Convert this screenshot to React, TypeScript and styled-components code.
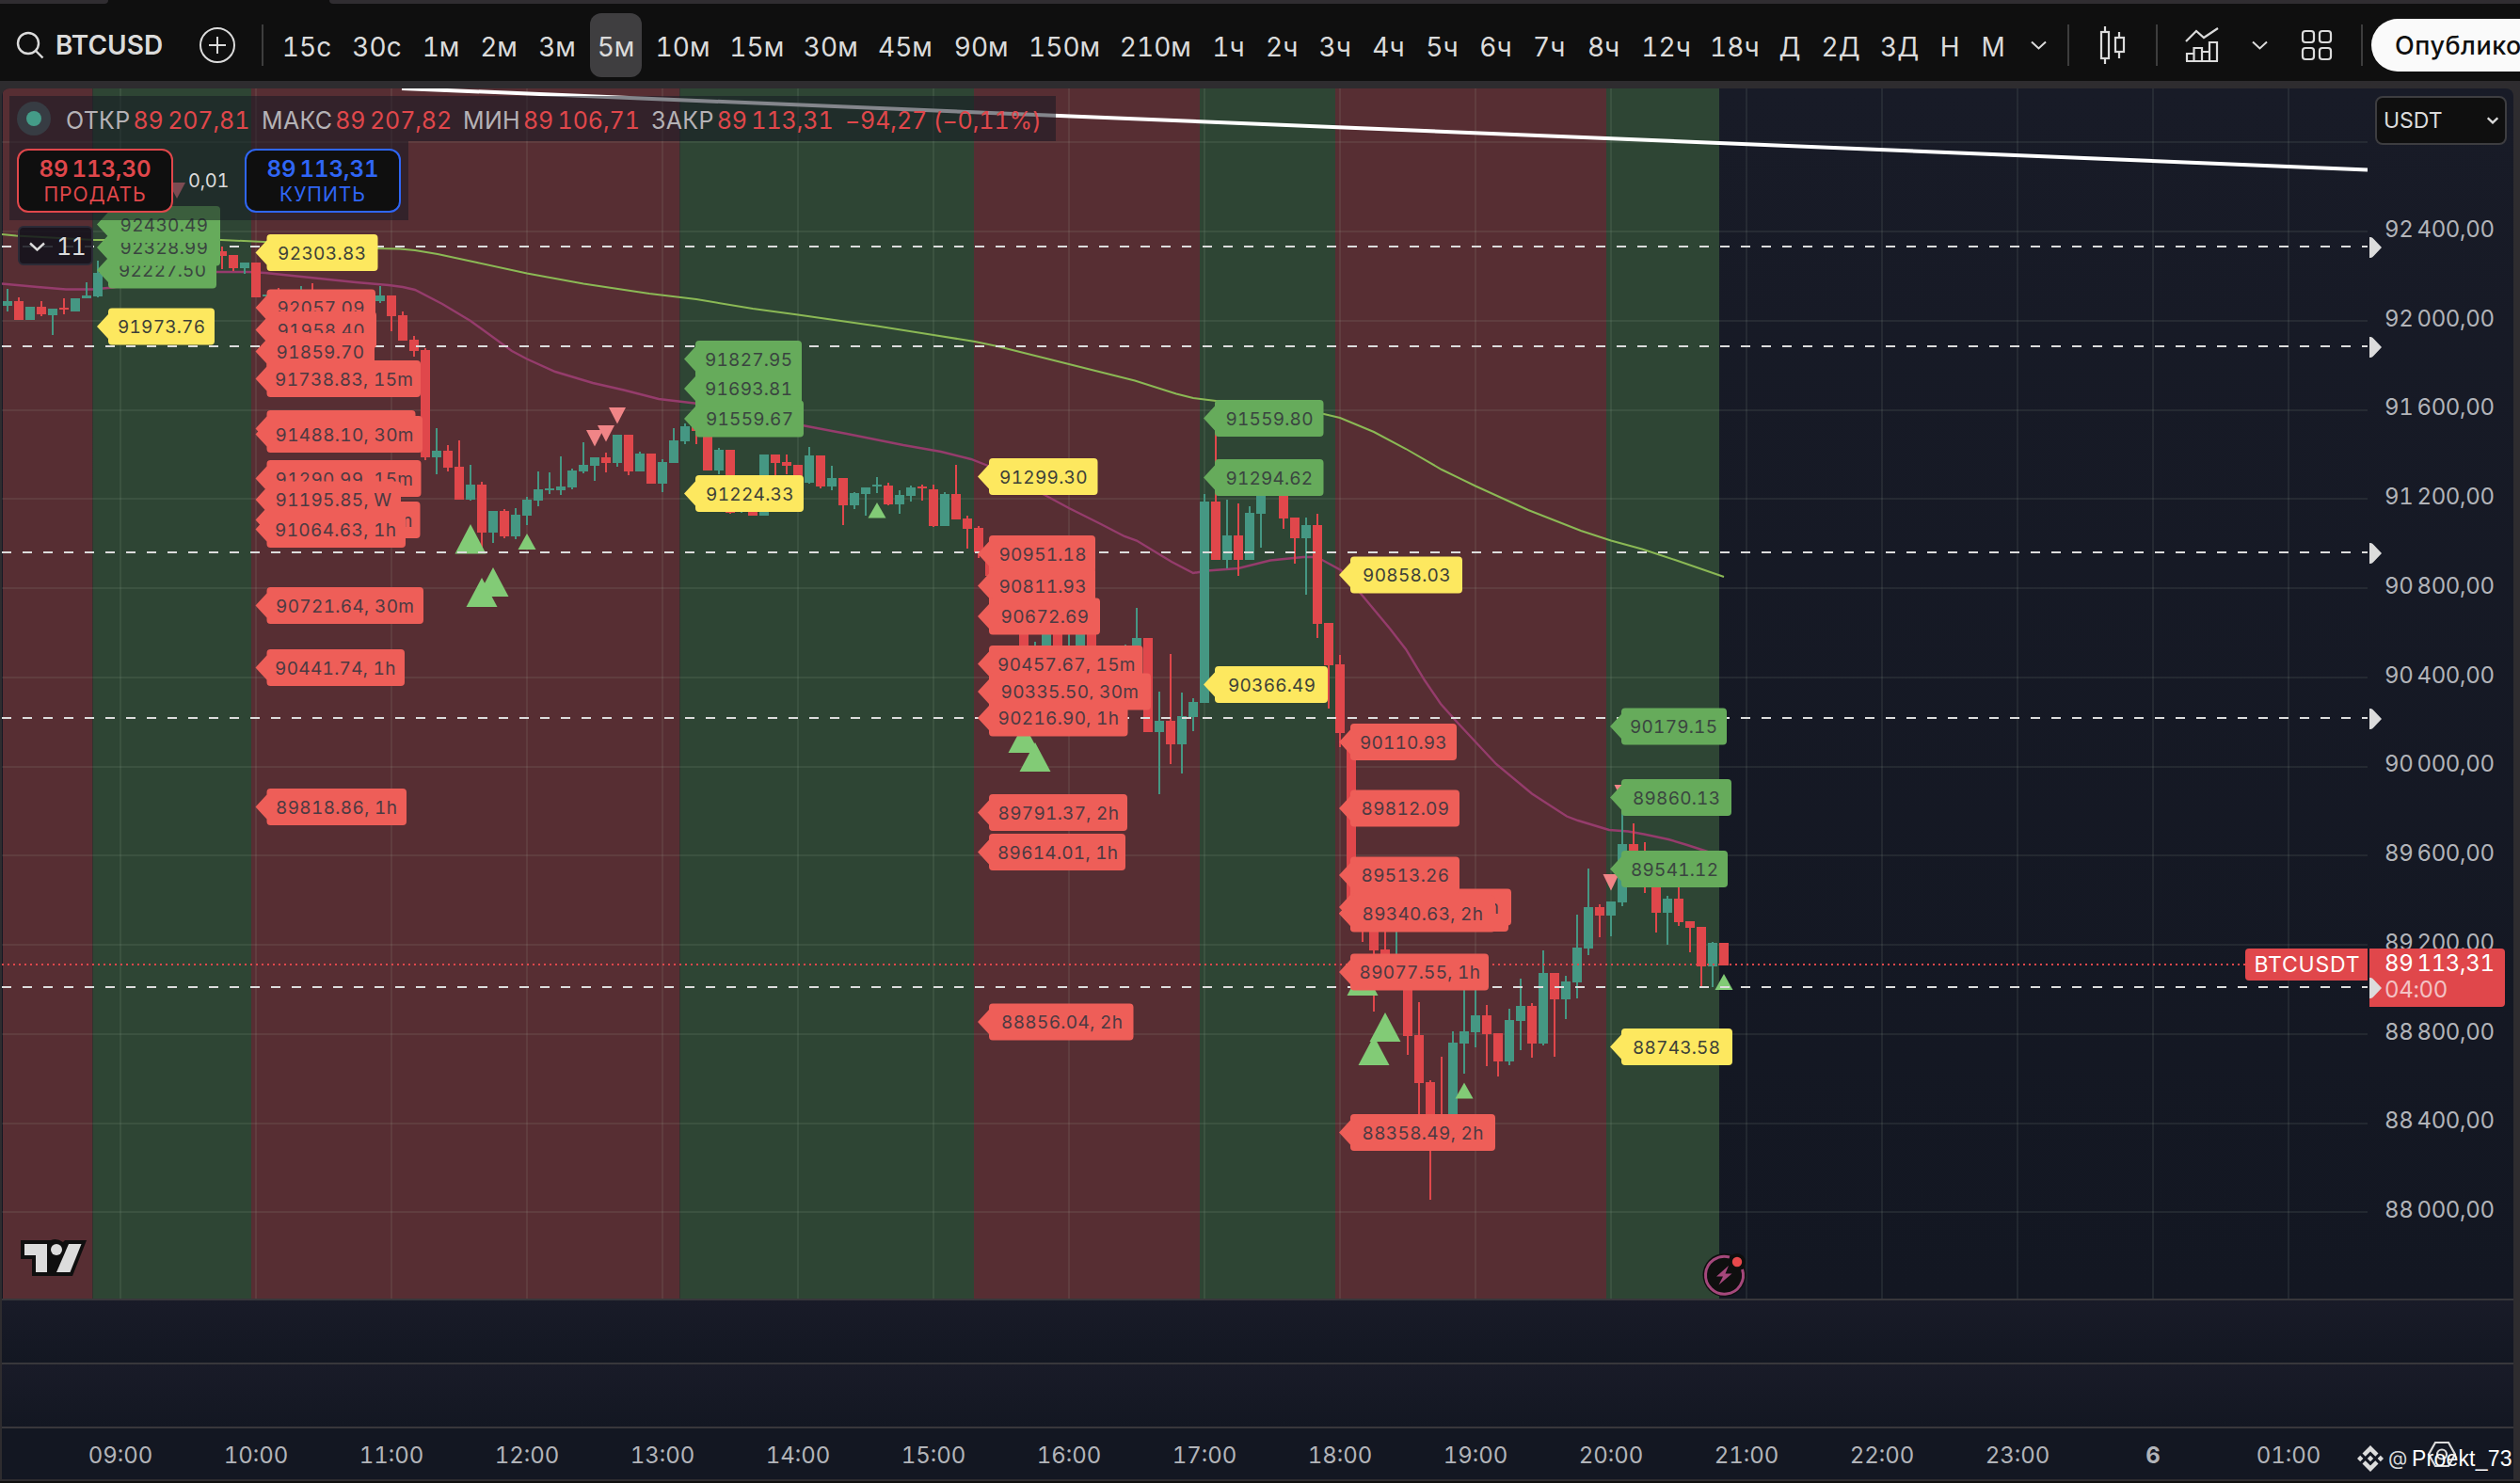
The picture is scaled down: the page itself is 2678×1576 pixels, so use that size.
import styled, { createGlobalStyle } from 'styled-components';

const UP = '#459783';
const DOWN = '#e0474b';

const palette = {
  green: { fill: '#66ab5b', text: '#3a4540' },
  yellow: { fill: '#fde85f', text: '#3c4038' },
  red: { fill: '#ee5e58', text: '#4c3a42' },
};

const GlobalStyle = createGlobalStyle`
  * {
    box-sizing: border-box;
  }

  body {
    margin: 0;
    background: #0f0f0f;
    font-family: Inter, 'Noto Sans', sans-serif;
    font-variant-numeric: tabular-nums;
    overflow: hidden;
  }
`;

const Page = styled.div`
  display: flex;
  flex-direction: column;
  width: 2678px;
  height: 1576px;
  background: #0f0f0f;
`;

const TabStrip = styled.div`
  display: flex;
  justify-content: space-between;
  height: 4px;
`;

const TabEdge = styled.div<{ $width: number; $side: 'left' | 'right' }>`
  width: ${({ $width }) => $width}px;
  background: #302d31;
  border-radius: ${({ $side }) => ($side === 'left' ? '0 0 6px 0' : '0 0 0 6px')};
`;

const Toolbar = styled.header`
  display: flex;
  align-items: center;
  height: 82px;
  padding: 6px 0 0 17px;
  color: #dbdbdb;
  font-size: 28px;
  overflow: hidden;
  white-space: nowrap;

  > * {
    flex-shrink: 0;
  }
`;

const SymbolSearch = styled.div`
  display: flex;
  align-items: center;
  gap: 12px;
  width: 194px;
  font-weight: 600;
  font-size: 28px;
`;

const Divider = styled.div<{ $before?: number; $after?: number }>`
  width: 2px;
  height: 44px;
  margin-left: ${({ $before = 0 }) => $before}px;
  margin-right: ${({ $after = 0 }) => $after}px;
  background: #3d3d3d;
`;

const Intervals = styled.div`
  display: flex;
  gap: 8px;
`;

const Interval = styled.div<{ $width: number; $active: boolean }>`
  display: flex;
  align-items: center;
  justify-content: center;
  width: ${({ $width }) => $width}px;
  height: 68px;
  padding-top: 3px;
  border-radius: 12px;
  background: ${({ $active }) => ($active ? '#3f3e40' : 'transparent')};
`;

const IconCell = styled.div<{ $width: number }>`
  display: flex;
  align-items: center;
  justify-content: center;
  width: ${({ $width }) => $width}px;
  height: 68px;
`;

const PublishButton = styled.div`
  display: flex;
  align-items: center;
  width: 240px;
  height: 56px;
  margin-left: 9px;
  padding-left: 25px;
  border-radius: 28px;
  background: #fafafa;
  color: #0f0f0f;
  font-size: 27px;
  font-weight: 500;
  letter-spacing: 0.5px;
`;

const Workspace = styled.main`
  display: flex;
  flex-direction: column;
  height: 1488px;
  padding: 8px 7px 2px 2px;
  background: #2e2c2f;
`;

const Main = styled.section`
  position: relative;
  display: flex;
  height: 1286px;
  border-radius: 8px 8px 0 0;
  background: linear-gradient(#181b27, #131722);
  overflow: hidden;
`;

const Plot = styled.svg`
  display: block;
  width: 2514px;
  height: 1286px;
`;

const EmptyPane = styled.div`
  height: 68px;
  border-top: 2px solid #38373b;
  background: linear-gradient(#191b28, #131722);
`;

const PriceAxis = styled.aside`
  position: relative;
  width: 155px;
  padding: 8px 0 0 8px;
`;

const CurrencySelect = styled.div`
  display: flex;
  align-items: center;
  justify-content: space-between;
  width: 140px;
  height: 52px;
  margin-bottom: 42px;
  padding: 0 7px;
  border: 2px solid #3d3d40;
  border-radius: 8px;
  background: #0f0f0f;
  color: #dbdbdb;
  font-size: 23px;
`;

const AxisPrice = styled.div`
  display: flex;
  align-items: center;
  height: 94.75px;
  padding-left: 10px;
  color: #b2b4b9;
  font-size: 24px;
  letter-spacing: -0.35px;
`;

const LineHandle = styled.svg<{ $top: number }>`
  position: absolute;
  left: 2px;
  top: ${({ $top }) => $top}px;
  width: 14px;
  height: 22px;
`;

const LastPrice = styled.div`
  position: absolute;
  left: 2px;
  top: 914px;
  display: flex;
  flex-direction: column;
  width: 144px;
  height: 62px;
  padding: 2px 0 0 16px;
  border-radius: 0 4px 4px 0;
  background: ${DOWN};
  color: #fff;
  font-size: 24px;
  line-height: 28px;
  letter-spacing: -0.35px;
`;

const Countdown = styled.span`
  color: #f3c2c4;
`;

const TimeAxis = styled.footer`
  position: relative;
  display: flex;
  align-items: center;
  height: 56px;
  padding-left: 54px;
  border-top: 2px solid #38373b;
  background: #131722;
`;

const TimeLabel = styled.div<{ $bold: boolean }>`
  width: 144px;
  padding-top: 2px;
  text-align: center;
  color: #b2b4b9;
  font-size: 24px;
  font-weight: ${({ $bold }) => ($bold ? 700 : 400)};
`;

const SettingsIcon = styled.svg`
  position: absolute;
  left: 2577px;
  top: 13px;
  width: 32px;
  height: 30px;
`;

const Watermark = styled.div`
  position: absolute;
  left: 2503px;
  top: 17px;
  display: flex;
  align-items: center;
  color: #fff;
  font-family: 'Liberation Sans', Arial, sans-serif;
  font-size: 23px;
  line-height: 30px;
  letter-spacing: 0.2px;
  white-space: nowrap;
`;

const At = styled.span`
  width: 25px;
  margin-left: 5px;
  color: #d6d7d9;
  font-family: Inter, sans-serif;
  font-size: 21px;
`;

const Legend = styled.div`
  position: absolute;
  left: 8px;
  top: 8px;
  display: flex;
  flex-direction: column;
  align-items: flex-start;
`;

const QuoteRow = styled.div`
  display: flex;
  align-items: center;
  width: 1112px;
  height: 48px;
  padding-left: 8px;
  background: rgba(19, 23, 34, 0.52);
  color: ${DOWN};
  font-size: 25px;
  white-space: nowrap;
`;

const StatusDot = styled.div`
  display: flex;
  align-items: center;
  justify-content: center;
  width: 36px;
  height: 36px;
  margin-right: 16px;
  border-radius: 50%;
  background: #373c43;

  &::after {
    content: '';
    width: 16px;
    height: 16px;
    border-radius: 50%;
    background: #449c88;
  }
`;

const QuoteItem = styled.div<{ $width: number }>`
  display: flex;
  gap: 3px;
  width: ${({ $width }) => $width}px;
  padding-top: 4px;
  letter-spacing: -0.1px;
`;

const QuoteName = styled.span`
  color: #b5b2b6;
  letter-spacing: 0.3px;
`;

const TradeRow = styled.div`
  display: flex;
  align-items: center;
  width: 424px;
  height: 84px;
  padding-left: 8px;
  background: rgba(19, 23, 34, 0.52);
`;

const TradeButton = styled.div<{ $color: string }>`
  display: flex;
  flex-direction: column;
  align-items: center;
  justify-content: center;
  width: 166px;
  height: 68px;
  padding-top: 1px;
  border: 2px solid ${({ $color }) => $color};
  border-radius: 12px;
  background: #0f0f0f;
  color: ${({ $color }) => $color};
  font-size: 21px;
  line-height: 27px;
  letter-spacing: 1px;
`;

const TradePrice = styled.strong`
  font-size: 24px;
  font-weight: 600;
  letter-spacing: 0;
`;

const Spread = styled.div`
  width: 76px;
  padding-left: 16px;
  color: #dbdbdb;
  font-size: 20px;
  letter-spacing: -0.3px;
`;

const Collapse = styled.div`
  display: flex;
  align-items: center;
  gap: 12px;
  width: 80px;
  height: 42px;
  margin: 6px 0 0 9px;
  padding: 2px 0 0 10px;
  border: 2px solid #2b2a36;
  border-radius: 6px;
  background: rgba(15, 17, 26, 0.84);
  color: #dbdbdb;
  font-size: 25px;
  letter-spacing: -0.6px;
`;

const intervals: [string, number][] = [
  ['15с', 66], ['30с', 67], ['1м', 53], ['2м', 54], ['3м', 54], ['5м', 55],
  ['10м', 71], ['15м', 70.6], ['30м', 70.4], ['45м', 72], ['90м', 73.5], ['150м', 87.3],
  ['210м', 90.2], ['1ч', 49], ['2ч', 48.5], ['3ч', 48.5], ['4ч', 49], ['5ч', 49],
  ['6ч', 49], ['7ч', 48.6], ['8ч', 51], ['12ч', 66], ['18ч', 63.5], ['Д', 38],
  ['2Д', 54], ['3Д', 55], ['Н', 36], ['М', 40],
];

const quotes: [string, string, number][] = [
  ['ОТКР', '89\u2009207,81', 208],
  ['МАКС', '89\u2009207,82', 214],
  ['МИН', '89\u2009106,71', 200],
  ['ЗАКР', '89\u2009113,31', 206],
];

const axisPrices = [
  '92\u2009400,00', '92\u2009000,00', '91\u2009600,00', '91\u2009200,00', '90\u2009800,00', '90\u2009400,00',
  '90\u2009000,00', '89\u2009600,00', '89\u2009200,00', '88\u2009800,00', '88\u2009400,00', '88\u2009000,00',
];

const times = [
  '09:00', '10:00', '11:00', '12:00', '13:00', '14:00', '15:00', '16:00', '17:00',
  '18:00', '19:00', '20:00', '21:00', '22:00', '23:00', '6', '01:00',
];

// trend zones: start, end, direction
const zones: [number, number, 'up' | 'down'][] = [
  [3, 98.5, 'down'], [98.5, 267, 'up'], [267, 722.5, 'down'], [722.5, 1035, 'up'],
  [1035, 1275, 'down'], [1275, 1419, 'up'], [1419, 1707, 'down'], [1707, 1827, 'up'],
];

const levels = [262, 368, 587, 763, 1049];

// x, body top, body bottom, wick top, wick bottom, rising
const candles: [number, number, number, number, number, 0 | 1][] = [
  [8, 320, 325, 307, 331, 1], [20, 320, 340, 316, 340, 0], [32, 326, 340, 326, 340, 1],
  [44, 326, 334, 320, 336, 0], [56, 328, 335, 328, 356, 1], [68, 327, 329, 317, 334, 0],
  [80, 317, 331, 317, 331, 1], [92, 314, 317, 300, 317, 1], [104, 290, 315, 277, 316, 1],
  [236, 267, 272, 262, 286, 0], [248, 271, 285, 271, 288, 0], [260, 279, 285, 279, 291, 1],
  [272, 279, 316, 279, 316, 0], [284, 313, 315, 313, 315, 1], [296, 310, 320, 306, 320, 0],
  [320, 310, 320, 304, 320, 1], [332, 310, 320, 301, 320, 0], [404, 314, 320, 304, 322, 1],
  [416, 314, 336, 314, 352, 0], [428, 335, 362, 331, 362, 0], [440, 361, 373, 357, 379, 0],
  [452, 372, 486, 370, 489, 0], [464, 479, 486, 455, 504, 1], [476, 479, 497, 473, 501, 0],
  [488, 496, 531, 468, 531, 0], [500, 515, 531, 494, 532, 1], [512, 515, 566, 512, 587, 0],
  [524, 543, 566, 543, 577, 1], [536, 543, 570, 541, 572, 0], [548, 547, 570, 540, 573, 1],
  [560, 531, 548, 528, 558, 1], [572, 520, 532, 501, 538, 1], [584, 519, 521, 502, 525, 1],
  [596, 517, 521, 485, 526, 1], [608, 500, 518, 498, 520, 1], [620, 494, 501, 470, 503, 1],
  [632, 486, 495, 486, 511, 1], [644, 486, 492, 481, 502, 0], [656, 462, 492, 462, 496, 1],
  [668, 462, 501, 462, 505, 0], [680, 482, 501, 480, 501, 1], [692, 482, 514, 482, 514, 0],
  [704, 491, 514, 488, 523, 1], [716, 468, 492, 455, 492, 1], [728, 453, 469, 450, 472, 1],
  [740, 453, 458, 453, 472, 0], [752, 450, 500, 450, 500, 0], [764, 478, 500, 476, 504, 1],
  [776, 478, 545, 478, 546, 0], [788, 520, 543, 520, 545, 1], [800, 520, 548, 520, 548, 0],
  [812, 483, 548, 483, 548, 1], [824, 483, 492, 483, 507, 0], [836, 491, 495, 483, 504, 0],
  [848, 494, 509, 494, 509, 0], [860, 484, 513, 475, 514, 1], [872, 484, 517, 484, 519, 0],
  [884, 508, 517, 495, 521, 1], [896, 508, 537, 508, 558, 0], [908, 524, 537, 523, 541, 1],
  [920, 518, 525, 518, 548, 1], [932, 515, 517, 507, 524, 1], [944, 516, 536, 513, 537, 0],
  [956, 526, 536, 521, 546, 1], [968, 518, 527, 516, 533, 1], [980, 517, 519, 515, 532, 0],
  [992, 520, 559, 515, 560, 0], [1004, 525, 559, 523, 559, 1], [1016, 525, 552, 494, 552, 0],
  [1028, 551, 562, 548, 583, 0], [1040, 561, 587, 559, 593, 0], [1052, 587, 612, 587, 612, 0],
  [1088, 650, 690, 650, 690, 0], [1100, 690, 700, 682, 700, 1], [1112, 660, 690, 660, 690, 1],
  [1124, 660, 690, 660, 690, 0], [1136, 660, 668, 660, 690, 1], [1148, 660, 690, 660, 690, 1],
  [1160, 660, 690, 660, 690, 0], [1196, 692, 700, 685, 700, 1], [1208, 678, 700, 646, 700, 1],
  [1220, 678, 778, 678, 778, 0], [1232, 766, 778, 735, 844, 1], [1244, 766, 791, 695, 812, 0],
  [1256, 761, 791, 736, 822, 1], [1268, 746, 762, 742, 777, 1], [1280, 533, 747, 525, 747, 1],
  [1292, 533, 595, 460, 595, 0], [1304, 569, 595, 531, 604, 1], [1316, 569, 595, 535, 612, 0],
  [1328, 545, 595, 538, 595, 1], [1340, 500, 546, 500, 582, 1], [1364, 510, 551, 510, 562, 0],
  [1376, 550, 572, 550, 599, 0], [1388, 558, 572, 550, 632, 1], [1400, 558, 663, 546, 678, 0],
  [1412, 662, 707, 662, 753, 0], [1424, 706, 779, 696, 794, 0], [1436, 794, 960, 794, 960, 0],
  [1448, 960, 985, 960, 1001, 0], [1460, 975, 1010, 975, 1075, 0], [1472, 1009, 1030, 985, 1030, 0],
  [1484, 1020, 1030, 985, 1030, 1], [1496, 1040, 1101, 1040, 1121, 0], [1508, 1100, 1151, 1065, 1195, 0],
  [1520, 1150, 1205, 1148, 1275, 0], [1532, 1195, 1205, 1123, 1205, 0], [1544, 1108, 1195, 1096, 1195, 1],
  [1556, 1096, 1109, 1050, 1141, 1], [1568, 1079, 1097, 1050, 1113, 1], [1580, 1079, 1099, 1068, 1133, 0],
  [1592, 1098, 1128, 1098, 1144, 0], [1604, 1084, 1128, 1072, 1132, 1], [1616, 1069, 1085, 1040, 1116, 1],
  [1628, 1069, 1109, 1066, 1124, 0], [1640, 1034, 1109, 1010, 1111, 1], [1652, 1034, 1062, 1034, 1123, 0],
  [1664, 1043, 1062, 1037, 1083, 1], [1676, 1007, 1044, 972, 1061, 1], [1688, 964, 1008, 923, 1015, 1],
  [1700, 964, 973, 961, 996, 0], [1712, 958, 973, 958, 995, 1], [1724, 897, 959, 855, 963, 1],
  [1736, 897, 912, 875, 912, 0], [1748, 912, 940, 895, 949, 0], [1760, 935, 970, 935, 991, 0],
  [1772, 955, 970, 952, 1004, 1], [1784, 955, 980, 940, 984, 0], [1796, 979, 986, 979, 1012, 0],
  [1808, 985, 1027, 985, 1048, 0], [1820, 1002, 1027, 1001, 1049, 1], [1832, 1002, 1026, 1002, 1026, 0],
];

// apex x, apex y, half width, height (negative height points down)
const markers: [number, number, number, number][] = [
  [500, 557, 16.5, 31.5], [524, 603, 16.5, 31], [512, 614, 16.5, 31], [560, 567, 9.5, 17],
  [932, 534, 9.5, 16.5], [1088, 769, 16.5, 31], [1100, 789, 16.5, 31], [1448, 1027, 16.5, 31],
  [1472, 1076, 16.5, 31], [1460, 1101, 16.5, 31], [1556, 1150.5, 9.5, 17], [1832, 1035, 9.5, 17],
  [188, 211, 9, -17], [632, 474.5, 9, -17.5], [644, 469.5, 9, -17.5], [656, 450.5, 9, -17.5],
  [1712, 946.5, 8.5, -17.5], [1724, 851, 8.5, -17],
];

type TagColor = keyof typeof palette;

// tip x, center y, right edge, text start, text end, label, color; later tags cover earlier ones
const tags: [number, number, number, number, number, string, TagColor][] = [
  [103, 287, 230, 127, 218, '92227.50', 'green'],
  [103, 263, 234, 128.5, 220, '92328.99', 'green'],
  [103, 238.5, 234, 128.5, 220, '92430.49', 'green'],
  [103, 347, 228, 126, 217, '91973.76', 'yellow'],
  [271.5, 268.5, 401.5, 296, 388, '92303.83', 'yellow'],
  [271.5, 327, 399, 295.5, 386.5, '92057.09', 'red'],
  [271.5, 350.5, 400, 295.5, 386.5, '91958.40', 'red'],
  [271.5, 373.5, 398, 294.5, 386, '91859.70', 'red'],
  [271.5, 402.5, 447, 293, 438, '91738.83, 15m', 'red'],
  [271.5, 455.5, 441.5, 293, 430, '91513.24, 1h', 'red'],
  [271.5, 461.5, 449, 293.5, 438.5, '91488.10, 30m', 'red'],
  [271.5, 508.5, 447.5, 293.5, 438, '91290.99, 15m', 'red'],
  [271.5, 552.5, 446.5, 293, 437.5, '91105.36, 30m', 'red'],
  [271.5, 531, 426, 293.5, 415, '91195.85, W', 'red'],
  [271.5, 562.5, 431, 293, 420, '91064.63, 1h', 'red'],
  [271.5, 643.5, 450, 294, 439, '90721.64, 30m', 'red'],
  [271.5, 709.5, 430, 293, 419.5, '90441.74, 1h', 'red'],
  [271.5, 857.5, 432, 294, 421, '89818.86, 1h', 'red'],
  [727, 445, 854, 751, 842, '91559.67', 'green'],
  [727, 413, 852, 750, 841, '91693.81', 'green'],
  [727, 381.5, 852, 750, 841, '91827.95', 'green'],
  [727, 524.5, 854, 751, 842.5, '91224.33', 'yellow'],
  [1039, 506.5, 1166.5, 1063, 1154.5, '91299.30', 'yellow'],
  [1039, 588.5, 1164, 1062.5, 1153.5, '90951.18', 'red'],
  [1039, 622.5, 1164, 1062.5, 1153.5, '90811.93', 'red'],
  [1039, 655, 1169, 1064.5, 1156, '90672.69', 'red'],
  [1039, 705.5, 1214.5, 1061, 1205.5, '90457.67, 15m', 'red'],
  [1039, 735, 1223, 1064.5, 1209, '90335.50, 30m', 'red'],
  [1039, 763, 1198.5, 1061.5, 1188, '90216.90, 1h', 'red'],
  [1039, 863.5, 1198, 1061.5, 1188, '89791.37, 2h', 'red'],
  [1039, 905.5, 1196, 1061, 1187, '89614.01, 1h', 'red'],
  [1039, 1086, 1204.5, 1065, 1192, '88856.04, 2h', 'red'],
  [1279, 444.5, 1406.5, 1303.5, 1394.5, '91559.80', 'green'],
  [1279, 507.5, 1406.5, 1303.5, 1394, '91294.62', 'green'],
  [1279, 727.5, 1411, 1306, 1397, '90366.49', 'yellow'],
  [1423, 611, 1554, 1449, 1540.5, '90858.03', 'yellow'],
  [1423, 788.5, 1548, 1446, 1536.5, '90110.93', 'red'],
  [1423, 859, 1551, 1447.5, 1539, '89812.09', 'red'],
  [1423, 970.5, 1603, 1447, 1575, '89339.02, 2h', 'red'],
  [1423, 964, 1606, 1447, 1592, '89368.21, 30m', 'red'],
  [1423, 930, 1551, 1447.5, 1539, '89513.26', 'red'],
  [1423, 971, 1589, 1448.5, 1575, '89340.63, 2h', 'red'],
  [1423, 1033, 1582, 1445.5, 1572, '89077.55, 1h', 'red'],
  [1423, 1203.5, 1589, 1448.5, 1575.5, '88358.49, 2h', 'red'],
  [1711, 772, 1835, 1733, 1824, '90179.15', 'green'],
  [1711, 847.5, 1840, 1736, 1827, '89860.13', 'green'],
  [1711, 923.5, 1836, 1734, 1825, '89541.12', 'green'],
  [1711, 1112.5, 1841, 1736, 1827, '88743.58', 'yellow'],
];

const slowAverage =
  '2,249 17,250.5 100,255 235,255 280,257 402,264 425,264.5 441,266 465,270 507,279 560,290.5 620,301.5 690,312 740,318 800,328 848,334.5 932,346.5 992,356 1036,363 1060,368 1136,387 1206,404.5 1250,418.5 1268,423 1292,426 1350,432 1407,440 1424,444 1460,459 1494,477 1532,499 1568,516.5 1624,542 1680,564 1712,574.5 1745,583.5 1780,595 1832,613';

const fastAverage =
  '2,301.5 40,305 70,307.5 98,307.5 120,305.5 170,296 230,289 265,289 282,290 330,295 378,300 413,303 428,305 441,308 470,323 500,341 544,373 560,381.5 590,395 630,407 663,414.5 700,424 738,428.5 790,440 855,452.5 900,461 960,473 1000,480 1032,488 1050,495 1112,527 1136,540 1170,557 1195,570 1208,574.5 1245,597 1268,609 1283,606.5 1316,604 1350,595.5 1385,592 1395,592 1405,595 1425,606 1447,632 1477,668 1494,690 1514,723 1531,748 1548,767 1590,812 1628,843.5 1665,867.5 1677,872 1710,882 1730,883.5 1747,886.5 1773,892 1793,898 1813,904.5 1832,911';

const Chevron = ({ width = 17, stroke = 2 }: { width?: number; stroke?: number }) => (
  <svg width={width} height={width / 2 + 2} viewBox="0 0 17 10.5" fill="none">
    <path d="M1 1.5 8.5 8.5 16 1.5" stroke="#dbdbdb" strokeWidth={stroke} />
  </svg>
);

const PriceTag = ({ tag }: { tag: (typeof tags)[number] }) => {
  const [tip, y, right, from, to, label, color] = tag;
  const left = tip + 12;

  return (
    <g>
      <path
        fill={palette[color].fill}
        d={`M${tip} ${y} L${left} ${y - 13} V${y - 15.5} q0 -4 4 -4 H${right - 4} q4 0 4 4 V${y + 15.5} q0 4 -4 4 H${left + 4} q-4 0 -4 -4 V${y + 13} Z`}
      />
      <text
        x={from - 1}
        y={y + 7}
        fill={palette[color].text}
        fontSize={19}
        textLength={to - from + 2}
        lengthAdjust="spacing"
      >
        {label}
      </text>
    </g>
  );
};

const Chart = () => (
  <Plot viewBox="2 94 2514 1286">
    {zones.map(([from, to, kind]) => (
      <rect key={from} x={from} y={94} width={to - from} height={1286} fill={kind === 'up' ? '#2e4534' : '#572e33'} />
    ))}

    <g fill="rgba(200, 225, 200, 0.085)">
      {times.map((time, i) => (
        <rect key={time} x={127 + i * 144} y={94} width={2} height={1286} />
      ))}
      <rect x={2} y={150} width={2514} height={2} />
      {axisPrices.map((price, i) => (
        <rect key={price} x={2} y={Math.round(245 + i * 94.75)} width={2514} height={2} />
      ))}
    </g>

    <polyline points={slowAverage} fill="none" stroke="#8bb955" strokeWidth={2} />
    <polyline points={fastAverage} fill="none" stroke="#953c6c" strokeWidth={2.4} />

    {candles.map(([x, top, bottom, high, low, rising]) => (
      <g key={x} fill={rising ? UP : DOWN}>
        <rect x={x - 1} y={high} width={2} height={low - high} />
        <rect x={x - 5} y={top} width={10} height={bottom - top} />
      </g>
    ))}

    {markers.map(([x, y, half, height]) => (
      <path
        key={`${x}-${y}`}
        fill={height > 0 ? '#82cb76' : '#f08587'}
        d={`M${x} ${y} l${half} ${height > 0 ? height : height} h${-half * 2} Z`}
      />
    ))}

    <line x1={427} y1={94} x2={2516} y2={180.5} stroke="#fff" strokeWidth={4} />
    {levels.map((y) => (
      <line key={y} x1={2} y1={y} x2={2516} y2={y} stroke="#dcdcdc" strokeWidth={2} strokeDasharray="10 12" />
    ))}
    <line x1={2} y1={1025} x2={2386} y2={1025} stroke={DOWN} strokeWidth={2} strokeDasharray="2 4" />

    {tags.map((tag) => (
      <PriceTag key={tag[5]} tag={tag} />
    ))}

    <path d="M2390 1008 H2516 V1042 H2390 q-4 0 -4 -4 V1012 q0 -4 4 -4" fill={DOWN} />
    <text x={2395.5} y={1033} fill="#fff" fontSize={23} textLength={112}>
      BTCUSDT
    </text>

    {/* logo */}
    <path
      d="M22 1318 H54 Q60 1315 67 1320 L69 1318 H92 L77 1356 H34 V1338 H22 Z"
      fill="#0f0f0f"
    />
    <g fill="#dcdcdc">
      <path d="M26 1322 H50 V1352 H38 V1334 H26 Z" />
      <circle cx={60} cy={1328} r={6} />
      <path d="M73 1322 H86.5 L74.5 1352 H60 Z" />
    </g>

    {/* event badge */}
    <circle cx={1832.5} cy={1355} r={23} fill="#0f0f0f" />
    <path d="M1838 1336 A20 20 0 1 0 1851.5 1349" fill="none" stroke="#a5487c" strokeWidth={3} />
    <path d="M1837 1345 L1824 1356.5 H1831 L1826.5 1365.5 L1840.5 1353.5 H1833.5 Z" fill="#a5487c" />
    <circle cx={1846} cy={1341} r={9} fill="#0f0f0f" />
    <circle cx={1846} cy={1341} r={5.2} fill="#e8494c" />
  </Plot>
);

const App = () => (
  <>
    <GlobalStyle />
    <Page>
      <TabStrip>
        <TabEdge $width={115} $side="left" />
        <TabEdge $width={2328} $side="right" />
      </TabStrip>

      <Toolbar>
        <SymbolSearch>
          <svg width={30} height={30} viewBox="0 0 30 30" fill="none" stroke="#dbdbdb" strokeWidth={2.4}>
            <circle cx={13} cy={13} r={11} />
            <path d="M20.5 20.5 28.5 28.5" />
          </svg>
          BTCUSD
        </SymbolSearch>
        <svg width={40} height={40} viewBox="0 0 40 40" fill="none" stroke="#dbdbdb" strokeWidth={2}>
          <circle cx={20} cy={20} r={18} />
          <path d="M20 11 V29 M11 20 H29" />
        </svg>
        <Divider $before={27} $after={13} />

        <Intervals>
          {intervals.map(([label, width]) => (
            <Interval key={label} $width={width} $active={label === '5м'}>
              {label}
            </Interval>
          ))}
          <IconCell $width={40}>
            <Chevron />
          </IconCell>
        </Intervals>

        <Divider $before={11} />
        <IconCell $width={92}>
          <svg width={28} height={42} viewBox="0 0 28 42" fill="none" stroke="#dbdbdb" strokeWidth={2.2}>
            <path d="M6 1 V7 M6 35 V41 M21 7 V13 M21 28 V35" />
            <rect x={2} y={7} width={8} height={28} />
            <rect x={17} y={13} width={9} height={15} />
          </svg>
        </IconCell>
        <Divider />
        <IconCell $width={94}>
          <svg width={36} height={38} viewBox="0 0 36 38" fill="none" stroke="#dbdbdb" strokeWidth={2.2}>
            <path d="M1 15 L12 4 L20 11 L35 1" />
            <path d="M2 36 V28 H9.5 V36 M9.5 28 V22 H18 V36 M18 26 H26 M26 36 V16 H34 V36 M1 36 H35" />
          </svg>
        </IconCell>
        <IconCell $width={28}>
          <Chevron />
        </IconCell>
        <IconCell $width={94}>
          <svg width={34} height={34} viewBox="0 0 34 34" fill="none" stroke="#dbdbdb" strokeWidth={2.2}>
            <rect x={2} y={2} width={12} height={12} rx={3} />
            <rect x={20} y={2} width={12} height={12} rx={3} />
            <rect x={2} y={20} width={12} height={12} rx={3} />
            <rect x={20} y={20} width={12} height={12} rx={3} />
          </svg>
        </IconCell>
        <Divider />
        <PublishButton>Опубликовать</PublishButton>
      </Toolbar>

      <Workspace>
        <Main>
          <Chart />
          <Legend>
            <QuoteRow>
              <StatusDot />
              {quotes.map(([name, value, width]) => (
                <QuoteItem key={name} $width={width}>
                  <QuoteName>{name}</QuoteName>
                  {value}
                </QuoteItem>
              ))}
              <QuoteItem $width={212}>−94,27 (−0,11%)</QuoteItem>
            </QuoteRow>
            <TradeRow>
              <TradeButton $color={DOWN}>
                <TradePrice>{'89\u2009113,30'}</TradePrice>
                ПРОДАТЬ
              </TradeButton>
              <Spread>0,01</Spread>
              <TradeButton $color="#2f66f6">
                <TradePrice>{'89\u2009113,31'}</TradePrice>
                КУПИТЬ
              </TradeButton>
            </TradeRow>
            <Collapse>
              <Chevron stroke={2.4} />
              11
            </Collapse>
          </Legend>

          <PriceAxis>
            <CurrencySelect>
              USDT
              <Chevron width={12} stroke={3.4} />
            </CurrencySelect>
            {axisPrices.map((price) => (
              <AxisPrice key={price}>{price}</AxisPrice>
            ))}
            <LastPrice>
              {'89\u2009113,31'}
              <Countdown>04:00</Countdown>
            </LastPrice>
            {levels.map((y) => (
              <LineHandle key={y} $top={y - 104} viewBox="0 0 14 22">
                <path d="M0 0 H1 Q3 0 4.5 2 L13 11 L4.5 20 Q3 22 1 22 H0 Z" fill="#dcdcdc" />
              </LineHandle>
            ))}
          </PriceAxis>
        </Main>

        <EmptyPane />
        <EmptyPane />

        <TimeAxis>
          {times.map((time) => (
            <TimeLabel key={time} $bold={time === '6'}>
              {time}
            </TimeLabel>
          ))}
          <SettingsIcon viewBox="0 0 32 30" fill="none" stroke="#dbdbdb" strokeWidth={2.2}>
            <path d="M9 2 H23 L30 14.5 L23 27 H9 L2 14.5 Z" />
            <circle cx={16} cy={14.5} r={5} />
          </SettingsIcon>
          <Watermark>
            <svg width={28} height={28} viewBox="0 0 28 28" fill="#dcdcdc">
              <path d="M14 0 L22.5 8.5 L19.3 11.7 L14 6.4 L8.7 11.7 L5.5 8.5 Z" />
              <path d="M14 28 L22.5 19.5 L19.3 16.3 L14 21.6 L8.7 16.3 L5.5 19.5 Z" />
              <path d="M14 10.8 L17.2 14 L14 17.2 L10.8 14 Z M3.2 10.8 L6.4 14 L3.2 17.2 L0 14 Z M24.8 10.8 L28 14 L24.8 17.2 L21.6 14 Z" />
            </svg>
            <At>@</At>
            Proekt_73
          </Watermark>
        </TimeAxis>
      </Workspace>
    </Page>
  </>
);

export default App;
